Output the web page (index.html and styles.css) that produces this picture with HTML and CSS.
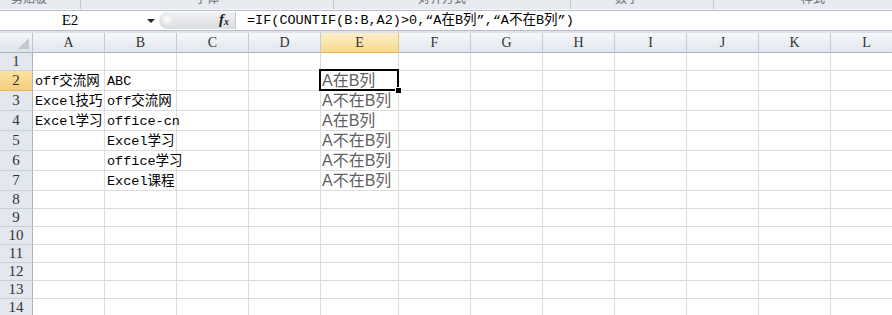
FILE: index.html
```html
<!DOCTYPE html>
<html lang="zh-CN">
<head>
<meta charset="utf-8">
<title>Excel</title>
<link rel="stylesheet" href="styles.css">
</head>
<body>
<div class="top">
  <div class="ribbon">
    <div class="grp g1"><span>剪贴板</span></div>
    <div class="grp g2"><span>字体</span></div>
    <div class="grp g3"><span>对齐方式</span></div>
    <div class="grp g4"><span>数字</span></div>
    <div class="grp g5"><span>样式</span></div>
  </div>
  <div class="fbar">
    <div class="namebox"><span class="name">E2</span><span class="arrow"></span></div>
    <div class="pill"><span class="knob"></span><span class="fx">f<sub>x</sub></span></div>
    <div class="formula">=IF(COUNTIF(B:B,A2)&gt;0,“A在B列”,“A不在B列”)</div>
  </div>
</div>
<div class="sheet">
  <div class="row hdr">
    <div class="corner"><span class="tri"></span></div>
    <div class="ch">A</div><div class="ch">B</div><div class="ch">C</div><div class="ch">D</div><div class="ch on">E</div><div class="ch">F</div><div class="ch">G</div><div class="ch">H</div><div class="ch">I</div><div class="ch">J</div><div class="ch">K</div><div class="ch">L</div>
  </div>
  <div class="row s">
    <div class="rh">1</div><div class="c"></div><div class="c"></div><div class="c"></div><div class="c"></div><div class="c"></div><div class="c"></div><div class="c"></div><div class="c"></div><div class="c"></div><div class="c"></div><div class="c"></div><div class="c"></div>
  </div>
  <div class="row t">
    <div class="rh on">2</div><div class="c">off交流网</div><div class="c">ABC</div><div class="c"></div><div class="c"></div><div class="c e sel">A在B列</div><div class="c"></div><div class="c"></div><div class="c"></div><div class="c"></div><div class="c"></div><div class="c"></div><div class="c"></div>
  </div>
  <div class="row t">
    <div class="rh">3</div><div class="c clip">Excel技巧</div><div class="c">off交流网</div><div class="c"></div><div class="c"></div><div class="c e">A不在B列</div><div class="c"></div><div class="c"></div><div class="c"></div><div class="c"></div><div class="c"></div><div class="c"></div><div class="c"></div>
  </div>
  <div class="row t">
    <div class="rh">4</div><div class="c clip">Excel学习</div><div class="c">office-cn</div><div class="c"></div><div class="c"></div><div class="c e">A在B列</div><div class="c"></div><div class="c"></div><div class="c"></div><div class="c"></div><div class="c"></div><div class="c"></div><div class="c"></div>
  </div>
  <div class="row t">
    <div class="rh">5</div><div class="c"></div><div class="c">Excel学习</div><div class="c"></div><div class="c"></div><div class="c e">A不在B列</div><div class="c"></div><div class="c"></div><div class="c"></div><div class="c"></div><div class="c"></div><div class="c"></div><div class="c"></div>
  </div>
  <div class="row t">
    <div class="rh">6</div><div class="c"></div><div class="c">office学习</div><div class="c"></div><div class="c"></div><div class="c e">A不在B列</div><div class="c"></div><div class="c"></div><div class="c"></div><div class="c"></div><div class="c"></div><div class="c"></div><div class="c"></div>
  </div>
  <div class="row t">
    <div class="rh">7</div><div class="c"></div><div class="c">Excel课程</div><div class="c"></div><div class="c"></div><div class="c e">A不在B列</div><div class="c"></div><div class="c"></div><div class="c"></div><div class="c"></div><div class="c"></div><div class="c"></div><div class="c"></div>
  </div>
  <div class="row s">
    <div class="rh">8</div><div class="c"></div><div class="c"></div><div class="c"></div><div class="c"></div><div class="c"></div><div class="c"></div><div class="c"></div><div class="c"></div><div class="c"></div><div class="c"></div><div class="c"></div><div class="c"></div>
  </div>
  <div class="row s">
    <div class="rh">9</div><div class="c"></div><div class="c"></div><div class="c"></div><div class="c"></div><div class="c"></div><div class="c"></div><div class="c"></div><div class="c"></div><div class="c"></div><div class="c"></div><div class="c"></div><div class="c"></div>
  </div>
  <div class="row s">
    <div class="rh">10</div><div class="c"></div><div class="c"></div><div class="c"></div><div class="c"></div><div class="c"></div><div class="c"></div><div class="c"></div><div class="c"></div><div class="c"></div><div class="c"></div><div class="c"></div><div class="c"></div>
  </div>
  <div class="row s">
    <div class="rh">11</div><div class="c"></div><div class="c"></div><div class="c"></div><div class="c"></div><div class="c"></div><div class="c"></div><div class="c"></div><div class="c"></div><div class="c"></div><div class="c"></div><div class="c"></div><div class="c"></div>
  </div>
  <div class="row s">
    <div class="rh">12</div><div class="c"></div><div class="c"></div><div class="c"></div><div class="c"></div><div class="c"></div><div class="c"></div><div class="c"></div><div class="c"></div><div class="c"></div><div class="c"></div><div class="c"></div><div class="c"></div>
  </div>
  <div class="row s">
    <div class="rh">13</div><div class="c"></div><div class="c"></div><div class="c"></div><div class="c"></div><div class="c"></div><div class="c"></div><div class="c"></div><div class="c"></div><div class="c"></div><div class="c"></div><div class="c"></div><div class="c"></div>
  </div>
  <div class="row s">
    <div class="rh">14</div><div class="c"></div><div class="c"></div><div class="c"></div><div class="c"></div><div class="c"></div><div class="c"></div><div class="c"></div><div class="c"></div><div class="c"></div><div class="c"></div><div class="c"></div><div class="c"></div>
  </div>
</div>
</body>
</html>
```
FILE: styles.css
```css
html, body {
  margin: 0;
  padding: 0;
}
body {
  width: 892px;
  height: 315px;
  overflow: hidden;
  background: #ffffff;
  font-family: "Liberation Mono", "Noto Sans CJK SC", monospace;
  color: #000;
}

/* ---------- top area ---------- */
.top {
  background: #dfe3e8;
  padding-bottom: 2px;
}
.ribbon {
  height: 9px;
  display: flex;
  background: #e7eaee;
  border-bottom: 1px solid #f7f8fa;
  overflow: hidden;
}
.grp {
  height: 9px;
  display: flex;
  justify-content: center;
  align-items: flex-start;
  overflow: hidden;
  border-right: 1px solid #c3c8cf;
  box-sizing: border-box;
}
.grp span {
  margin-top: -10px;
  font-family: "Noto Sans CJK SC", sans-serif;
  font-size: 12px;
  line-height: 16px;
  color: #6a6f76;
}
.g1 { width: 81px; padding-right: 22px; }
.g2 { width: 253px; }
.g3 { width: 237px; padding-right: 20px; }
.g4 { width: 143px; padding-right: 30px; }
.g5 { flex: 1; border-right: none; padding-left: 20px; }

.fbar {
  height: 19px;
  display: flex;
  background: #ffffff;
  border-top: 1px solid #b7bec8;
  border-bottom: 1px solid #b7bec8;
}
.namebox {
  width: 159px;
  display: flex;
  align-items: center;
}
.name {
  width: 140px;
  text-align: center;
  font-family: "Liberation Serif", "Noto Sans CJK SC", serif;
  font-size: 15px;
  line-height: 19px;
}
.arrow {
  width: 0;
  height: 0;
  margin-left: 7px;
  border-left: 4px solid transparent;
  border-right: 4px solid transparent;
  border-top: 4px solid #222;
}
.pill {
  width: 77px;
  height: 17px;
  margin-top: 1px;
  display: flex;
  align-items: center;
  justify-content: space-between;
  border-radius: 9px 0 0 9px;
  background: linear-gradient(#f1f2f3, #dadcdf);
  box-sizing: border-box;
  border-right: 1px solid #c2c7ce;
}
.knob {
  width: 13px;
  height: 15px;
  margin-left: 1px;
  border-radius: 50%;
  background: radial-gradient(circle at 55% 40%, #ffffff 0, #eaeaea 45%, #c9cbce 100%);
}
.fx {
  font-family: "Liberation Serif", serif;
  font-style: italic;
  font-weight: bold;
  font-size: 15px;
  line-height: 15px;
  margin-right: 6px;
  color: #222;
}
.fx sub {
  font-size: 10px;
  vertical-align: -1px;
}
.formula {
  flex: 1;
  padding-left: 11px;
  font-size: 13.5px;
  line-height: 19px;
  white-space: nowrap;
}

/* ---------- sheet ---------- */
.sheet {
  display: flex;
  flex-direction: column;
}
.row {
  display: grid;
  grid-template-columns: 33px 72px 72px 72px 72px 78px 72px 72px 72px 72px 72px 72px 72px;
}
.hdr { height: 20px; }
.s { height: 18px; }
.t { height: 20px; }

.corner, .ch, .rh, .c {
  box-sizing: border-box;
  border-right: 1px solid #dadcdd;
  border-bottom: 1px solid #dadcdd;
}
.corner {
  position: relative;
  background: linear-gradient(#f4f6f9, #dfe4eb);
  border-right-color: #bcc4ce;
  border-bottom-color: #a9b4c2;
}
.tri {
  position: absolute;
  right: 3px;
  bottom: 3px;
  width: 0;
  height: 0;
  border-left: 11px solid transparent;
  border-bottom: 11px solid #c2c8d0;
}
.ch {
  display: flex;
  align-items: center;
  justify-content: center;
  font-family: "Liberation Serif", serif;
  font-size: 14px;
  color: #333;
  background: linear-gradient(#f5f7fa, #e2e7ee);
  border-right-color: #c5ccd5;
  border-bottom-color: #a9b4c2;
}
.ch.on {
  background: linear-gradient(#fdf0c9, #f8d98c);
  border-right-color: #e2c27a;
  border-bottom-color: #e2b85a;
}
.rh {
  display: flex;
  align-items: center;
  justify-content: center;
  font-family: "Liberation Serif", serif;
  font-size: 15px;
  color: #333;
  background: #e3e8ef;
  border-right-color: #a9b4c2;
  border-bottom-color: #c9d0da;
}
.rh.on {
  background: linear-gradient(#fbe2a2, #f6cf7a);
  border-bottom-color: #e0b964;
}
.c {
  display: flex;
  align-items: flex-end;
  padding-left: 2px;
  font-size: 13.5px;
  line-height: 17px;
  white-space: nowrap;
}
.c.clip {
  overflow: hidden;
}
.c.e {
  font-family: "Liberation Sans", "Noto Sans CJK SC", sans-serif;
  font-size: 16px;
  line-height: 19px;
  color: #5f5f5f;
  padding-left: 1px;
}
.c.sel {
  position: relative;
}
.c.sel::before {
  content: "";
  position: absolute;
  left: -2px;
  top: -2px;
  right: -1px;
  bottom: -1px;
  border: 2px solid #000;
}
.c.sel::after {
  content: "";
  position: absolute;
  right: -4px;
  bottom: -4px;
  width: 5px;
  height: 5px;
  background: #000;
  border: 1px solid #fff;
}
```
